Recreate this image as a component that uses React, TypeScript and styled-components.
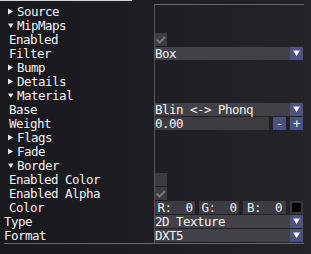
import React from "react";
import styled, { createGlobalStyle } from "styled-components";

const GlobalStyle = createGlobalStyle`
  html, body {
    margin: 0;
    padding: 0;
    background: #1e1d23;
  }
  body {
    width: 311px;
    height: 254px;
    overflow: hidden;
    font-family: "DejaVu Sans Mono", "Liberation Mono", monospace;
    font-size: 12.5px;
    letter-spacing: -0.52px;
    color: #f2f2f2;
  }
`;

const Page = styled.div`
  width: 311px;
  height: 254px;
  background: linear-gradient(90deg, #19181d 0%, #1f1e24 55%, #242328 100%);
`;

const TopStub = styled.div`
  width: 132px;
  height: 1px;
  background: #d4d4d6;
  margin-bottom: 3px;
`;

const Table = styled.div`
  margin-left: 4px;
  width: 300px;
  display: grid;
  grid-template-columns: 150px 150px;
  grid-template-rows: 1px;
  grid-auto-rows: 14px;
  border-bottom: 1px solid #67666c;
`;

const HeadLine = styled.div<{ $line?: boolean }>`
  background: ${({ $line }) => ($line ? "#67666c" : "transparent")};
`;

const LabelCell = styled.div<{ $indent: number }>`
  display: flex;
  align-items: flex-start;
  padding-left: ${({ $indent }) => $indent}px;
  line-height: 14px;
  height: 13px;
  white-space: pre;
`;

const Arrow = styled.span`
  display: inline-flex;
  width: 9px;
  height: 13px;
  align-items: center;
`;

const ValueCell = styled.div`
  border-left: 1px solid #55545a;
  display: flex;
  align-items: flex-start;
  gap: 4px;
`;

const Frame = styled.div<{ $width?: number }>`
  height: 13px;
  line-height: 14px;
  background: #3c3b41;
  white-space: pre;
  ${({ $width }) => ($width ? `width: ${$width}px;` : "flex: 1;")}
`;

const Combo = styled.div`
  width: 148px;
  height: 13px;
  display: flex;
`;

const ComboText = styled.div`
  flex: 1;
  background: #424147;
  line-height: 14px;
  white-space: pre;
`;

const SmallButton = styled.div`
  width: 13px;
  height: 13px;
  background: #4b5181;
  display: flex;
  align-items: center;
  justify-content: center;
  line-height: 13px;
  color: #ffffff;
`;

const Check = styled.div`
  width: 12px;
  height: 13px;
  background: #3c3b41;
`;

const DragField = styled.div<{ $width?: number }>`
  height: 13px;
  line-height: 14px;
  background: #3c3b41;
  text-align: center;
  white-space: pre;
  ${({ $width }) => ($width ? `width: ${$width}px;` : "flex: 1;")}
`;

const Swatch = styled.div`
  width: 13px;
  height: 13px;
  box-sizing: border-box;
  background: #000000;
  border: 2px solid #38373d;
`;

const ColorRow = styled.div`
  width: 148px;
  display: flex;
  gap: 4px;
`;

const Row = styled.div`
  width: 148px;
  display: flex;
  gap: 4px;
`;

const TriRight = () => (
  <svg width="6" height="7" viewBox="0 0 6 7">
    <polygon points="0,0.5 5,3.5 0,6.5" fill="#ececec" />
  </svg>
);

const TriDown = () => (
  <svg width="6" height="6" viewBox="0 0 6 6">
    <polygon points="0,0.5 5.5,0.5 2.75,5" fill="#ececec" />
  </svg>
);

const DownArrow = () => (
  <svg width="13" height="13" viewBox="0 0 13 13">
    <polygon points="3,3.5 10,3.5 6.5,9" fill="#ffffff" />
  </svg>
);

const CheckMark = () => (
  <svg width="12" height="13" viewBox="0 0 12 13">
    <polyline
      points="1.5,6.5 4.5,9.5 10,4"
      fill="none"
      stroke="#77767c"
      strokeWidth="2"
    />
  </svg>
);

const ComboBox: React.FC<{ value: string }> = ({ value }) => (
  <Combo>
    <ComboText>{value}</ComboText>
    <SmallButton>
      <DownArrow />
    </SmallButton>
  </Combo>
);

type RowDef =
  | { kind: "node"; label: string; open: boolean }
  | { kind: "leaf"; label: string; indent: number; widget: React.ReactNode };

const rows: RowDef[] = [
  { kind: "node", label: "Source", open: false },
  { kind: "node", label: "MipMaps", open: true },
  { kind: "leaf", label: "Enabled", indent: 5, widget: <Check><CheckMark /></Check> },
  { kind: "leaf", label: "Filter", indent: 5, widget: <ComboBox value="Box" /> },
  { kind: "node", label: "Bump", open: false },
  { kind: "node", label: "Details", open: false },
  { kind: "node", label: "Material", open: true },
  { kind: "leaf", label: "Base", indent: 5, widget: <ComboBox value="Blin <-> Phonq" /> },
  {
    kind: "leaf",
    label: "Weight",
    indent: 5,
    widget: (
      <Row>
        <Frame>0.00</Frame>
        <SmallButton>-</SmallButton>
        <SmallButton>+</SmallButton>
      </Row>
    ),
  },
  { kind: "node", label: "Flags", open: false },
  { kind: "node", label: "Fade", open: false },
  { kind: "node", label: "Border", open: true },
  { kind: "leaf", label: "Enabled Color", indent: 5, widget: <Check /> },
  { kind: "leaf", label: "Enabled Alpha", indent: 5, widget: <Check><CheckMark /></Check> },
  {
    kind: "leaf",
    label: "Color",
    indent: 5,
    widget: (
      <ColorRow>
        <DragField $width={40}>R:  0</DragField>
        <DragField $width={40}>G:  0</DragField>
        <DragField>B:  0</DragField>
        <Swatch />
      </ColorRow>
    ),
  },
  { kind: "leaf", label: "Type", indent: 0, widget: <ComboBox value="2D Texture" /> },
  { kind: "leaf", label: "Format", indent: 0, widget: <ComboBox value="DXT5" /> },
];

export default function App() {
  return (
    <Page>
      <GlobalStyle />
      <TopStub />
      <Table>
        <HeadLine />
        <HeadLine $line />
        {rows.map((r) =>
          r.kind === "node" ? (
            <React.Fragment key={r.label}>
              <LabelCell $indent={4}>
                <Arrow>{r.open ? <TriDown /> : <TriRight />}</Arrow>
                {r.label}
              </LabelCell>
              <ValueCell />
            </React.Fragment>
          ) : (
            <React.Fragment key={r.label}>
              <LabelCell $indent={r.indent}>{r.label}</LabelCell>
              <ValueCell>{r.widget}</ValueCell>
            </React.Fragment>
          )
        )}
      </Table>
    </Page>
  );
}
